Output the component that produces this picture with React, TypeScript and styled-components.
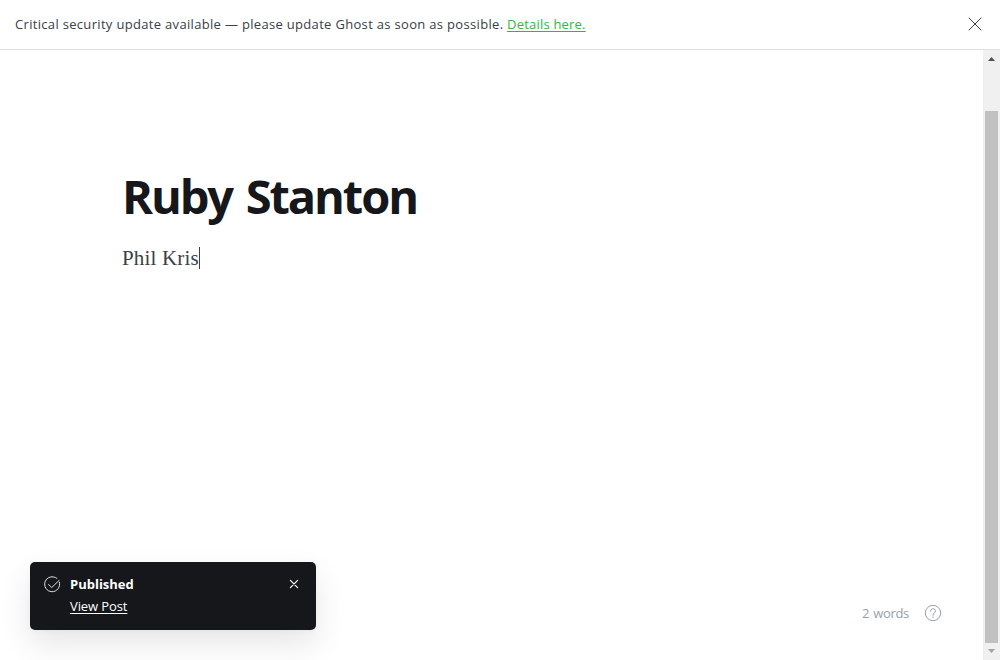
import React from 'react';
import styled, { createGlobalStyle } from 'styled-components';

const GlobalStyle = createGlobalStyle`
  * { box-sizing: border-box; }
  html, body { margin: 0; padding: 0; }
  body {
    background: #fff;
    color: #394047;
    font-family: "Open Sans", "Noto Sans", sans-serif;
    overflow: hidden;
  }
`;

const Page = styled.div`
  display: flex;
  flex-direction: column;
  height: 660px;
  width: 1000px;
  position: relative;
`;

const Banner = styled.header`
  display: flex;
  align-items: center;
  justify-content: space-between;
  flex: none;
  height: 50px;
  padding: 0 18px 2px 15px;
  border-bottom: 1px solid #dddedf;
  font-size: 13px;
  line-height: 20px;
  letter-spacing: 0.32px;
  white-space: nowrap;
`;

const BannerLink = styled.a`
  color: #2bba3c;
  letter-spacing: 0.2px;
  text-decoration: underline;
  text-underline-offset: 2px;
`;

const IconButton = styled.button<{ $offset?: number }>`
  display: flex;
  margin: ${({ $offset = 0 }) => $offset}px 0 0;
  padding: 0;
  border: 0;
  background: none;
  color: inherit;
`;

const Workspace = styled.div`
  display: flex;
  flex: 1;
  min-height: 0;
`;

const Editor = styled.main`
  display: flex;
  flex-direction: column;
  flex: 1;
  padding: 116px 41px 38px 122px;
`;

const Title = styled.h1`
  margin: 0;
  color: #15171a;
  font-size: 47px;
  font-weight: 700;
  line-height: 60px;
  letter-spacing: -2.1px;
  word-spacing: 3.6px;
  white-space: nowrap;
`;

const Body = styled.p`
  display: flex;
  align-items: flex-start;
  flex: 1;
  margin: 0;
  padding-top: 20px;
  font-family: "Liberation Serif", serif;
  font-size: 21px;
  line-height: 24px;
  letter-spacing: 0.17px;
`;

const Caret = styled.span`
  width: 1px;
  height: 22px;
  margin-top: 1px;
  background: #394047;
`;

const Status = styled.footer`
  display: flex;
  align-items: center;
  justify-content: flex-end;
  gap: 15px;
  height: 18px;
  color: #95a1ad;
  font-size: 13px;
  letter-spacing: -0.3px;
  word-spacing: 1px;
`;

const Scrollbar = styled.div`
  display: flex;
  flex-direction: column;
  align-items: center;
  width: 17px;
  background: #f0f0f0;
`;

const ScrollArrow = styled.svg`
  display: block;
  flex: none;
  width: 17px;
  height: 17px;
`;

const Thumb = styled.div`
  width: 13px;
  height: 532px;
  margin-top: 44px;
  background: #c1c1c1;
`;

const Toast = styled.aside`
  position: absolute;
  left: 30px;
  bottom: 30px;
  display: flex;
  align-items: flex-start;
  width: 286px;
  height: 68px;
  padding: 14px 17px 0 14px;
  border-radius: 5px;
  background: #15171a;
  color: #fff;
  box-shadow: 0 1px 7px rgba(0, 0, 0, 0.03), 0 14px 32px rgba(0, 0, 0, 0.1);
`;

const ToastText = styled.div`
  display: flex;
  flex-direction: column;
  align-items: flex-start;
  flex: 1;
  margin: -3px 0 0 9px;
  font-size: 13px;
  line-height: 22px;
`;

const ToastTitle = styled.strong`
  font-weight: 700;
`;

const ToastLink = styled.a`
  color: #fff;
  letter-spacing: -0.1px;
  text-decoration: underline;
  text-underline-offset: 2px;
`;

function Cross({ size, width, inset = 1 }: { size: number; width: number; inset?: number }) {
  const end = size - inset;
  return (
    <svg width={size} height={size} fill="none" stroke="currentColor" strokeWidth={width} strokeLinecap="round">
      <path d={`M${inset} ${inset}L${end} ${end}M${end} ${inset}L${inset} ${end}`} />
    </svg>
  );
}

export default function App() {
  return (
    <>
      <GlobalStyle />
      <Page>
        <Banner>
          <span>
            Critical security update available — please update Ghost as soon as possible.{' '}
            <BannerLink>Details here.</BannerLink>
          </span>
          <IconButton aria-label="Close banner"><Cross size={14} width={1} /></IconButton>
        </Banner>
        <Workspace>
          <Editor>
            <Title>Ruby Stanton</Title>
            <Body><span>Phil Kris</span><Caret /></Body>
            <Status>
              <span>2 words</span>
              <svg width="18" height="18" viewBox="0 0 18 18" fill="none" stroke="currentColor">
                <circle cx="9" cy="9" r="7.7" />
                <path d="M6.6 7.1a2.4 2.4 0 1 1 3.5 2.1c-.8.4-1.1.8-1.1 1.6v.4" strokeLinecap="round" />
                <circle cx="9" cy="13.2" r=".7" fill="currentColor" stroke="none" />
              </svg>
            </Status>
          </Editor>
          <Scrollbar>
            <ScrollArrow viewBox="0 0 17 17"><path d="M5 11h7L8.5 7z" fill="#505050" /></ScrollArrow>
            <Thumb />
            <ScrollArrow viewBox="0 0 17 17"><path d="M5 6h7L8.5 10z" fill="#a3a3a3" /></ScrollArrow>
          </Scrollbar>
        </Workspace>
        <Toast>
          <svg width="17" height="17" viewBox="0 0 17 17" fill="none" stroke="#e1e3e5" strokeLinecap="round" strokeLinejoin="round">
            <path d="M15.4 6.2A7.5 7.5 0 1 1 12.8 2.3" />
            <path d="M4.6 8.5l3.1 3.1 7.4-7.2" />
          </svg>
          <ToastText>
            <ToastTitle>Published</ToastTitle>
            <ToastLink>View Post</ToastLink>
          </ToastText>
          <IconButton aria-label="Dismiss" $offset={3}><Cross size={10} width={1.2} inset={1.4} /></IconButton>
        </Toast>
      </Page>
    </>
  );
}
